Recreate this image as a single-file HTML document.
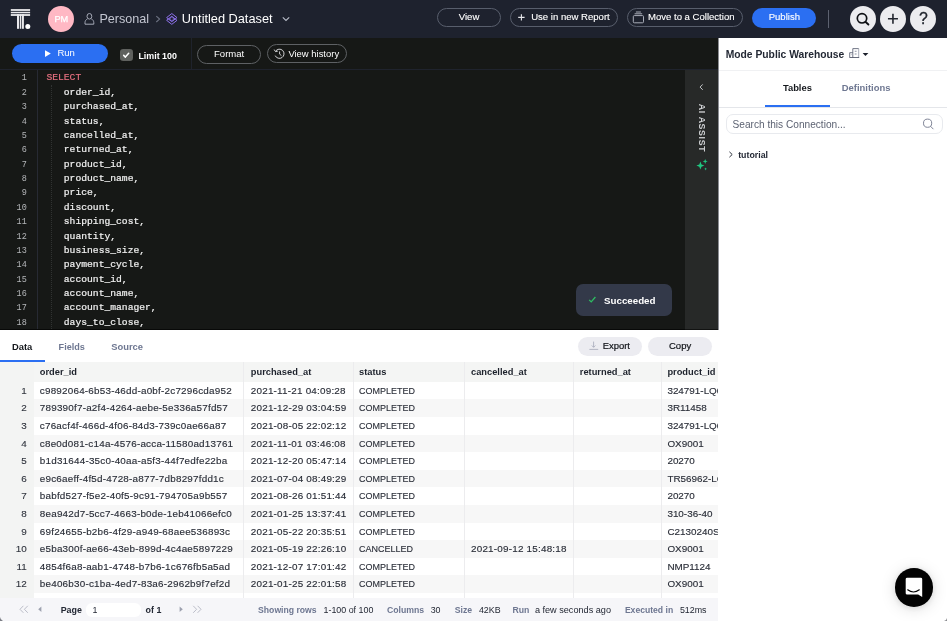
<!DOCTYPE html>
<html>
<head>
<meta charset="utf-8">
<title>Untitled Dataset</title>
<style>
html,body{margin:0;padding:0;}
body{width:947px;height:621px;overflow:hidden;background:#fff;position:relative;font-family:"Liberation Sans",sans-serif;color:#1f2430;}
.abs{position:absolute;}
.t{position:absolute;white-space:pre;line-height:14px;height:14px;}
.b{font-weight:700;}
/* header */
#hdr{left:0;top:0;width:947px;height:38px;background:#1e222e;}
.pill{position:absolute;box-sizing:border-box;border:1px solid #585e6c;border-radius:10px;height:19px;top:8px;}
.hbtn{font-size:9.55px;color:#fff;top:10.1px;-webkit-text-stroke:0.12px #fff;}
.circ{position:absolute;width:25.9px;height:25.9px;border-radius:50%;background:#ececef;top:5.95px;}
/* toolbar */
#tb{left:0;top:38px;width:718px;height:32px;background:#161816;}
#ed{left:0;top:70px;width:685px;height:260px;background:#161816;overflow:hidden;}
#ai{left:685px;top:70px;width:33px;height:260px;background:#272928;}
.ln{position:absolute;left:0;width:26.8px;text-align:right;font-family:"Liberation Mono",monospace;font-size:8.5px;color:#b4b6b9;height:14.375px;line-height:14.375px;}
.cl{position:absolute;left:46.4px;font-family:"Liberation Mono",monospace;font-size:9.68px;color:#f1f1f1;height:14.375px;line-height:14.375px;white-space:pre;-webkit-text-stroke:0.2px #f1f1f1;}
.hd{font-size:9.3px;color:#1d222c;}
.rn{left:0;width:26.8px;text-align:right;font-size:9.9px;color:#30343e;-webkit-text-stroke:0.12px #30343e;}
.c{font-size:9.9px;letter-spacing:0.21px;color:#2a2e38;-webkit-text-stroke:0.14px #2a2e38;}
.st{letter-spacing:0;transform:scaleX(0.909);transform-origin:0 50%;}
#hdr,#tb,#ed,#ai,#rp,#res,#toast{will-change:transform;}
.pi{letter-spacing:0;}
</style>
</head>
<body>

<!-- ================= HEADER ================= -->
<div id="hdr" class="abs">
  <!-- logo -->
  <svg class="abs" style="left:0;top:0" width="44" height="38" viewBox="0 0 44 38">
    <g fill="#e9e9ec">
      <rect x="10.8" y="9.1" width="19.3" height="1.8"/>
      <rect x="10.8" y="11.8" width="19.3" height="1.5"/>
      <rect x="10.8" y="14.1" width="19.3" height="1.8"/>
      <rect x="17.0" y="14.1" width="2.0" height="14.7"/>
      <rect x="19.8" y="14.1" width="1.5" height="14.7"/>
      <rect x="22.0" y="14.1" width="1.9" height="14.7"/>
    </g>
    <circle cx="27.8" cy="26.4" r="2.5" fill="#fff"/>
  </svg>
  <!-- avatar -->
  <div class="abs" style="left:48.4px;top:5.8px;width:25.8px;height:25.8px;border-radius:50%;background:#ffb8c4;"></div>
  <div class="t" style="left:48.4px;width:25.8px;top:12.0px;text-align:center;font-size:9.2px;color:#fff;-webkit-text-stroke:0.25px #fff;">PM</div>
  <!-- person icon -->
  <svg class="abs" style="left:83px;top:12px" width="13" height="14" viewBox="0 0 13 14">
    <g fill="none" stroke="#a6aab7" stroke-width="1.0">
      <ellipse cx="6.4" cy="4.3" rx="2.4" ry="2.8"/>
      <path d="M4.4 7.0 C2.8 7.7 2.1 8.9 2.0 10.6 L2.0 12.2 L10.8 12.2 L10.8 10.6 C10.7 8.9 10.0 7.7 8.4 7.0"/>
    </g>
  </svg>
  <div class="t" style="left:99.4px;top:11.6px;font-size:12.6px;color:#c3c6d1;">Personal</div>
  <!-- chevron -->
  <svg class="abs" style="left:154px;top:14px" width="8" height="10" viewBox="0 0 8 10">
    <path d="M2.3 2.2 L5.6 5.1 L2.3 8" fill="none" stroke="#6d7282" stroke-width="1.1"/>
  </svg>
  <!-- dataset icon -->
  <svg class="abs" style="left:165px;top:12px" width="14" height="14" viewBox="0 0 14 14">
    <g fill="none" stroke="#8e72ee" stroke-width="1.05" stroke-linejoin="round" transform="translate(6.8 6.95) scale(0.94) translate(-6.8 -6.85)">
      <path d="M6.8 1.1 L12.3 5.4 L6.8 9.7 L1.3 5.4 Z"/>
      <path d="M6.8 4.0 L12.3 8.3 L6.8 12.6 L1.3 8.3 Z"/>
      <path d="M3.15 6.85 L6.8 4.0 L10.45 6.85 L6.8 9.7 Z" fill="#8e72ee" fill-opacity="0.55" stroke="none"/>
      <circle cx="6.8" cy="6.85" r="1.2" fill="#1e222e" stroke="none"/>
    </g>
  </svg>
  <div class="t" style="left:181.8px;top:11.6px;font-size:12.75px;color:#fff;">Untitled Dataset</div>
  <svg class="abs" style="left:281px;top:15px" width="10" height="8" viewBox="0 0 10 8">
    <path d="M1.8 2.4 L5 5.5 L8.2 2.4" fill="none" stroke="#b9bdc9" stroke-width="1.1"/>
  </svg>

  <!-- View -->
  <div class="pill" style="left:437px;width:64.3px;"></div>
  <div class="t hbtn" style="left:458.8px;">View</div>
  <!-- Use in new Report -->
  <div class="pill" style="left:510.2px;width:108px;"></div>
  <svg class="abs" style="left:516px;top:12px" width="11" height="11" viewBox="0 0 11 11">
    <path d="M5.4 2.2 V8.6 M2.2 5.4 H8.6" stroke="#e6e7ea" stroke-width="1.1" fill="none"/>
  </svg>
  <div class="t hbtn" style="left:531.2px;">Use in new Report</div>
  <!-- Move to a Collection -->
  <div class="pill" style="left:627.3px;width:115.3px;"></div>
  <svg class="abs" style="left:632px;top:10px" width="13" height="14" viewBox="0 0 13 14">
    <g fill="none" stroke="#a9adb8" stroke-width="1">
      <rect x="1.3" y="5.6" width="10.2" height="7.2" rx="1"/>
      <path d="M2.6 3.8 H10.2 M3.9 2.0 H8.9"/>
    </g>
  </svg>
  <div class="t hbtn" style="left:648px;">Move to a Collection</div>
  <!-- Publish -->
  <div class="abs" style="left:751.7px;top:8px;width:64.4px;height:19.5px;border-radius:10px;background:#2b6ff2;"></div>
  <div class="t hbtn" style="left:768.7px;">Publish</div>
  <!-- divider -->
  <div class="abs" style="left:828px;top:9.5px;width:1px;height:18.5px;background:#5d6270;"></div>
  <!-- circles -->
  <div class="circ" style="left:849.8px;"></div>
  <svg class="abs" style="left:849.8px;top:5.8px" width="26" height="26" viewBox="0 0 26 26">
    <circle cx="12.0" cy="12.3" r="4.7" fill="none" stroke="#0e1014" stroke-width="1.7"/>
    <path d="M15.4 15.8 L18.4 18.5" stroke="#0e1014" stroke-width="1.9" stroke-linecap="round"/>
  </svg>
  <div class="circ" style="left:879.85px;"></div>
  <svg class="abs" style="left:880px;top:5.8px" width="26" height="26" viewBox="0 0 26 26">
    <path d="M12.95 7.8 V17.8 M7.95 12.8 H17.95" stroke="#22262f" stroke-width="1.6" fill="none"/>
  </svg>
  <div class="circ" style="left:910.35px;"></div>
  <div class="t" style="left:910.35px;width:25.9px;top:11.9px;text-align:center;font-size:15.8px;color:#22262f;-webkit-text-stroke:0.3px #22262f;">?</div>
</div>

<!-- ================= TOOLBAR ================= -->
<div id="tb" class="abs">
  <div class="abs" style="left:0;top:31px;width:718px;height:1px;background:#1f232d;"></div>
  <div class="abs" style="left:190.5px;top:0;width:1px;height:32px;background:#1f232c;"></div>
  <!-- Run -->
  <div class="abs" style="left:11.8px;top:5.8px;width:96.2px;height:19.3px;border-radius:10px;background:#2b6ff2;"></div>
  <svg class="abs" style="left:43px;top:11px" width="10" height="10" viewBox="0 0 10 10">
    <path d="M2 1.3 L7.8 4.6 L2 7.9 Z" fill="#fff"/>
  </svg>
  <div class="t" style="left:57.4px;top:8.3px;font-size:9.55px;color:#fff;">Run</div>
  <!-- checkbox -->
  <div class="abs" style="left:120.4px;top:10.5px;width:12.3px;height:12.5px;border-radius:3.2px;background:#5f615e;"></div>
  <svg class="abs" style="left:120.4px;top:10.5px" width="13" height="13" viewBox="0 0 13 13">
    <path d="M3.7 6.4 L5.4 8.1 L8.7 4.3" fill="none" stroke="#fff" stroke-width="1.5" stroke-linecap="round" stroke-linejoin="round"/>
  </svg>
  <div class="t b" style="left:138.4px;top:10.5px;font-size:8.9px;color:#fff;">Limit 100</div>
  <!-- Format -->
  <div class="pill" style="left:197px;top:7.2px;width:64.2px;border-color:#5e6164;"></div>
  <div class="t" style="left:214px;top:9.3px;font-size:9.55px;color:#fff;">Format</div>
  <!-- View history -->
  <div class="pill" style="left:267.3px;top:6.4px;width:80px;border-color:#5e6164;"></div>
  <svg class="abs" style="left:272.5px;top:10px" width="13" height="12" viewBox="0 0 13 12">
    <g fill="none" stroke="#d8d9db" stroke-width="0.95">
      <path d="M2.6 3.2 A4.6 4.6 0 1 1 2.2 7.6"/>
      <path d="M1.2 1.6 L2.5 3.6 L4.8 3.2"/>
      <path d="M6.6 3.4 V6.1 L8.4 7.6"/>
    </g>
  </svg>
  <div class="t" style="left:288.4px;top:8.6px;font-size:9.45px;color:#fff;">View history</div>
</div>

<!-- ================= EDITOR ================= -->
<div id="ed" class="abs">
  <div class="abs" style="left:37px;top:0;width:1px;height:260px;background:#272a33;"></div>
  <div class="abs" style="left:51.2px;top:14.6px;width:0;height:246px;border-left:1px dotted #303332;"></div>
  <div class="abs" style="left:0;top:259px;width:685px;height:1px;background:#080908;"></div>
  <div id="code">
  <div class="ln" style="top:1.40px">1</div>
  <div class="cl" style="top:1.40px;color:#e4707f;-webkit-text-stroke-color:#e4707f">SELECT</div>
  <div class="ln" style="top:15.78px">2</div>
  <div class="cl" style="top:15.78px">   order_id,</div>
  <div class="ln" style="top:30.15px">3</div>
  <div class="cl" style="top:30.15px">   purchased_at,</div>
  <div class="ln" style="top:44.52px">4</div>
  <div class="cl" style="top:44.52px">   status,</div>
  <div class="ln" style="top:58.90px">5</div>
  <div class="cl" style="top:58.90px">   cancelled_at,</div>
  <div class="ln" style="top:73.28px">6</div>
  <div class="cl" style="top:73.28px">   returned_at,</div>
  <div class="ln" style="top:87.65px">7</div>
  <div class="cl" style="top:87.65px">   product_id,</div>
  <div class="ln" style="top:102.03px">8</div>
  <div class="cl" style="top:102.03px">   product_name,</div>
  <div class="ln" style="top:116.40px">9</div>
  <div class="cl" style="top:116.40px">   price,</div>
  <div class="ln" style="top:130.78px">10</div>
  <div class="cl" style="top:130.78px">   discount,</div>
  <div class="ln" style="top:145.15px">11</div>
  <div class="cl" style="top:145.15px">   shipping_cost,</div>
  <div class="ln" style="top:159.53px">12</div>
  <div class="cl" style="top:159.53px">   quantity,</div>
  <div class="ln" style="top:173.90px">13</div>
  <div class="cl" style="top:173.90px">   business_size,</div>
  <div class="ln" style="top:188.28px">14</div>
  <div class="cl" style="top:188.28px">   payment_cycle,</div>
  <div class="ln" style="top:202.65px">15</div>
  <div class="cl" style="top:202.65px">   account_id,</div>
  <div class="ln" style="top:217.03px">16</div>
  <div class="cl" style="top:217.03px">   account_name,</div>
  <div class="ln" style="top:231.40px">17</div>
  <div class="cl" style="top:231.40px">   account_manager,</div>
  <div class="ln" style="top:245.78px">18</div>
  <div class="cl" style="top:245.78px">   days_to_close,</div>
  </div><!--/code-->
</div>

<!-- ================= AI STRIP ================= -->
<div id="ai" class="abs">
  <div class="abs" style="left:0;top:259px;width:33px;height:1px;background:#121312;"></div>
  <svg class="abs" style="left:12px;top:12px" width="9" height="10" viewBox="0 0 9 10">
    <path d="M5.7 2.4 L3.1 5.1 L5.7 7.8" fill="none" stroke="#c6c8ca" stroke-width="1"/>
  </svg>
  <div class="abs b" style="left:-13.4px;top:51.1px;width:60px;height:14px;line-height:14px;text-align:center;white-space:pre;font-size:8.8px;letter-spacing:0.62px;color:#cfd1d3;transform:rotate(90deg);transform-origin:50% 50%;">AI ASSIST</div>
  <svg class="abs" style="left:10px;top:88px" width="14" height="14" viewBox="0 0 14 14">
    <g fill="#1fc780">
      <path d="M5.4 3.6 L6.5 6.5 L9.4 7.6 L6.5 8.7 L5.4 11.6 L4.3 8.7 L1.4 7.6 L4.3 6.5 Z"/>
      <path d="M10.2 0.9 L10.9 2.7 L12.7 3.4 L10.9 4.1 L10.2 5.9 L9.5 4.1 L7.7 3.4 L9.5 2.7 Z"/>
      <path d="M10.6 9.4 L11.05 10.45 L12.1 10.9 L11.05 11.35 L10.6 12.4 L10.15 11.35 L9.1 10.9 L10.15 10.45 Z"/>
    </g>
  </svg>
</div>

<!-- ================= TOAST ================= -->
<div class="abs" style="left:575.8px;top:284.4px;width:96.4px;height:31.9px;border-radius:7px;background:#333949;"></div>
<svg class="abs" style="left:587px;top:294px" width="11" height="11" viewBox="0 0 11 11">
  <path d="M2.2 5.9 L4.2 7.9 L8.4 3.0" fill="none" stroke="#2ebd62" stroke-width="1.3"/>
</svg>
<div id="toast" class="t b" style="left:604.2px;top:294.0px;font-size:9.75px;color:#fff;">Succeeded</div>

<!-- ================= RIGHT PANEL ================= -->
<div id="rp" class="abs" style="left:718px;top:38px;width:229px;height:583px;background:#fff;"><div class="abs" style="left:0;top:0;width:1px;height:292px;background:#8b8d93;"></div><div class="abs" style="left:0.5px;top:0;width:228.5px;height:583px;">
  <div class="t b" style="left:7.2px;top:9.6px;font-size:10.3px;color:#232834;">Mode Public Warehouse</div>
  <svg class="abs" style="left:129px;top:9px" width="13" height="12" viewBox="0 0 13 12">
    <g fill="none" stroke-width="0.85">
      <path d="M4.8 10.4 V1.6 H10.9" stroke="#5a6072"/>
      <path d="M10.6 1.6 V10.4" stroke="#b9bcc6" stroke-width="1.3"/>
      <path d="M1.7 10.4 V5.7 H4.8" stroke="#5a6072"/>
      <path d="M1.5 10.5 H11.2" stroke="#4a5062"/>
      <path d="M6.7 4.3 H8.6 M6.7 7.0 H8.6" stroke="#8e93a3" stroke-width="1.1"/>
      <path d="M2.9 7.6 H3.7" stroke="#a9adb9" stroke-width="0.9"/>
    </g>
  </svg>
  <svg class="abs" style="left:143.5px;top:14px" width="8" height="5" viewBox="0 0 8 5">
    <path d="M0.6 1.0 H6.4 L3.5 3.9 Z" fill="#1b1f2a"/>
  </svg>
  <div class="abs" style="left:0;top:32px;width:228.5px;height:1px;background:#f0f1f3;"></div>
  <!-- tabs -->
  <div class="t b" style="left:64.4px;top:43px;font-size:9.4px;color:#15181d;">Tables</div>
  <div class="t b" style="left:123.2px;top:43px;font-size:9.45px;color:#6e7791;">Definitions</div>
  <div class="abs" style="left:0;top:68.6px;width:228.5px;height:1px;background:#e4e6ea;"></div>
  <div class="abs" style="left:46.5px;top:67.2px;width:64.5px;height:2px;background:#2b6ff2;"></div>
  <!-- search -->
  <div class="abs" style="left:7px;top:76.2px;width:217px;height:19.4px;box-sizing:border-box;border:1px solid #e8eaee;border-radius:7px;background:#fff;"></div>
  <div class="t" style="left:14px;top:79.7px;font-size:10.15px;color:#5c6272;">Search this Connection...</div>
  <svg class="abs" style="left:202px;top:79px" width="14" height="14" viewBox="0 0 14 14">
    <circle cx="6.6" cy="6.2" r="4.1" fill="none" stroke="#70768a" stroke-width="0.9"/>
    <path d="M9.6 9.3 L12.4 12.2" stroke="#70768a" stroke-width="0.9"/>
  </svg>
  <!-- tree -->
  <svg class="abs" style="left:8px;top:112px" width="8" height="9" viewBox="0 0 8 9">
    <path d="M2.4 1.8 L5.2 4.5 L2.4 7.2" fill="none" stroke="#232834" stroke-width="0.95"/>
  </svg>
  <div class="t b" style="left:19.7px;top:110.1px;font-size:8.8px;color:#232834;">tutorial</div>
</div></div>

<!-- ================= RESULTS ================= -->
<div id="res" class="abs" style="left:0;top:330px;width:718px;height:291px;background:#fff;overflow:hidden;"><div class="abs" style="left:0;top:-0.4px;width:718.5px;height:292px;">
<!--RES-->
<div class="t b" style="left:12px;top:10.2px;font-size:9.4px;color:#15181d;">Data</div>
<div class="t b" style="left:58.6px;top:10.2px;font-size:9.1px;color:#6e7791;">Fields</div>
<div class="t b" style="left:111.2px;top:10.2px;font-size:9.4px;color:#6e7791;">Source</div>
<div class="abs" style="left:0;top:30.4px;width:45.4px;height:2px;background:#2b6ff2;"></div>
<div class="abs" style="left:578.3px;top:7.2px;width:63.5px;height:19px;border-radius:9.5px;background:#ececf1;"></div>
<svg class="abs" style="left:587.5px;top:10.3px" width="11" height="11" viewBox="0 0 11 11"><g fill="none" stroke="#a3a7b8" stroke-width="0.8"><path d="M5.6 1.6 V7.2 M3.8 5.5 L5.6 7.3 L7.4 5.5 M1.4 9.4 H10.2"/></g></svg>
<div class="t" style="left:602.7px;top:9.3px;font-size:9.45px;color:#101318;-webkit-text-stroke:0.2px #101318;">Export</div>
<div class="abs" style="left:648.3px;top:7.2px;width:63.7px;height:19px;border-radius:9.5px;background:#ececf1;"></div>
<div class="t" style="left:669px;top:9.3px;font-size:9.5px;color:#101318;-webkit-text-stroke:0.2px #101318;">Copy</div>
<div class="abs" style="left:0;top:32.8px;width:718.5px;height:19.3px;background:#f4f5f4;"></div>
<div class="abs" style="left:0;top:32.8px;width:33.8px;height:235.3px;background:#f3f4f3;"></div>
<div class="abs" style="left:33.8px;top:52.1px;width:684.7px;height:17.6px;background:#ffffff;"></div>
<div class="abs" style="left:33.8px;top:69.7px;width:684.7px;height:17.6px;background:#f7f7f7;"></div>
<div class="abs" style="left:33.8px;top:87.3px;width:684.7px;height:17.6px;background:#ffffff;"></div>
<div class="abs" style="left:33.8px;top:104.9px;width:684.7px;height:17.6px;background:#f7f7f7;"></div>
<div class="abs" style="left:33.8px;top:122.5px;width:684.7px;height:17.6px;background:#ffffff;"></div>
<div class="abs" style="left:33.8px;top:140.1px;width:684.7px;height:17.6px;background:#f7f7f7;"></div>
<div class="abs" style="left:33.8px;top:157.7px;width:684.7px;height:17.6px;background:#ffffff;"></div>
<div class="abs" style="left:33.8px;top:175.3px;width:684.7px;height:17.6px;background:#f7f7f7;"></div>
<div class="abs" style="left:33.8px;top:192.9px;width:684.7px;height:17.6px;background:#ffffff;"></div>
<div class="abs" style="left:33.8px;top:210.5px;width:684.7px;height:17.6px;background:#f7f7f7;"></div>
<div class="abs" style="left:33.8px;top:228.1px;width:684.7px;height:17.6px;background:#ffffff;"></div>
<div class="abs" style="left:33.8px;top:245.7px;width:684.7px;height:17.6px;background:#f7f7f7;"></div>
<div class="abs" style="left:33.8px;top:263.3px;width:684.7px;height:17.6px;background:#ffffff;"></div>
<div class="abs" style="left:243.4px;top:32.8px;width:1px;height:235.3px;background:#ececee;"></div>
<div class="abs" style="left:352.5px;top:32.8px;width:1px;height:235.3px;background:#ececee;"></div>
<div class="abs" style="left:464.1px;top:32.8px;width:1px;height:235.3px;background:#ececee;"></div>
<div class="abs" style="left:572.8px;top:32.8px;width:1px;height:235.3px;background:#ececee;"></div>
<div class="abs" style="left:660.6px;top:32.8px;width:1px;height:235.3px;background:#ececee;"></div>
<div class="t b hd" style="left:39.8px;top:35.1px;">order_id</div>
<div class="t b hd" style="left:250.8px;top:35.1px;">purchased_at</div>
<div class="t b hd" style="left:359.0px;top:35.1px;">status</div>
<div class="t b hd" style="left:471.0px;top:35.1px;">cancelled_at</div>
<div class="t b hd" style="left:579.8px;top:35.1px;">returned_at</div>
<div class="t b hd" style="left:667.4px;top:35.1px;">product_id</div>
<div class="t rn" style="top:54.1px;">1</div>
<div class="t c" style="left:39.8px;top:54.1px;">c9892064-6b53-46dd-a0bf-2c7296cda952</div>
<div class="t c" style="left:250.8px;top:54.1px;">2021-11-21 04:09:28</div>
<div class="t c st" style="left:359.0px;top:54.1px;">COMPLETED</div>
<div class="t c pi" style="left:667.4px;top:54.1px;">324791-LQ02</div>
<div class="t rn" style="top:71.7px;">2</div>
<div class="t c" style="left:39.8px;top:71.7px;">789390f7-a2f4-4264-aebe-5e336a57fd57</div>
<div class="t c" style="left:250.8px;top:71.7px;">2021-12-29 03:04:59</div>
<div class="t c st" style="left:359.0px;top:71.7px;">COMPLETED</div>
<div class="t c pi" style="left:667.4px;top:71.7px;">3R11458</div>
<div class="t rn" style="top:89.3px;">3</div>
<div class="t c" style="left:39.8px;top:89.3px;">c76acf4f-466d-4f06-84d3-739c0ae66a87</div>
<div class="t c" style="left:250.8px;top:89.3px;">2021-08-05 22:02:12</div>
<div class="t c st" style="left:359.0px;top:89.3px;">COMPLETED</div>
<div class="t c pi" style="left:667.4px;top:89.3px;">324791-LQ02</div>
<div class="t rn" style="top:106.9px;">4</div>
<div class="t c" style="left:39.8px;top:106.9px;">c8e0d081-c14a-4576-acca-11580ad13761</div>
<div class="t c" style="left:250.8px;top:106.9px;">2021-11-01 03:46:08</div>
<div class="t c st" style="left:359.0px;top:106.9px;">COMPLETED</div>
<div class="t c pi" style="left:667.4px;top:106.9px;">OX9001</div>
<div class="t rn" style="top:124.5px;">5</div>
<div class="t c" style="left:39.8px;top:124.5px;">b1d31644-35c0-40aa-a5f3-44f7edfe22ba</div>
<div class="t c" style="left:250.8px;top:124.5px;">2021-12-20 05:47:14</div>
<div class="t c st" style="left:359.0px;top:124.5px;">COMPLETED</div>
<div class="t c pi" style="left:667.4px;top:124.5px;">20270</div>
<div class="t rn" style="top:142.1px;">6</div>
<div class="t c" style="left:39.8px;top:142.1px;">e9c6aeff-4f5d-4728-a877-7db8297fdd1c</div>
<div class="t c" style="left:250.8px;top:142.1px;">2021-07-04 08:49:29</div>
<div class="t c st" style="left:359.0px;top:142.1px;">COMPLETED</div>
<div class="t c pi" style="left:667.4px;top:142.1px;">TR56962-LC</div>
<div class="t rn" style="top:159.7px;">7</div>
<div class="t c" style="left:39.8px;top:159.7px;">babfd527-f5e2-40f5-9c91-794705a9b557</div>
<div class="t c" style="left:250.8px;top:159.7px;">2021-08-26 01:51:44</div>
<div class="t c st" style="left:359.0px;top:159.7px;">COMPLETED</div>
<div class="t c pi" style="left:667.4px;top:159.7px;">20270</div>
<div class="t rn" style="top:177.3px;">8</div>
<div class="t c" style="left:39.8px;top:177.3px;">8ea942d7-5cc7-4663-b0de-1eb41066efc0</div>
<div class="t c" style="left:250.8px;top:177.3px;">2021-01-25 13:37:41</div>
<div class="t c st" style="left:359.0px;top:177.3px;">COMPLETED</div>
<div class="t c pi" style="left:667.4px;top:177.3px;">310-36-40</div>
<div class="t rn" style="top:194.9px;">9</div>
<div class="t c" style="left:39.8px;top:194.9px;">69f24655-b2b6-4f29-a949-68aee536893c</div>
<div class="t c" style="left:250.8px;top:194.9px;">2021-05-22 20:35:51</div>
<div class="t c st" style="left:359.0px;top:194.9px;">COMPLETED</div>
<div class="t c pi" style="left:667.4px;top:194.9px;">C2130240SK</div>
<div class="t rn" style="top:212.5px;">10</div>
<div class="t c" style="left:39.8px;top:212.5px;">e5ba300f-ae66-43eb-899d-4c4ae5897229</div>
<div class="t c" style="left:250.8px;top:212.5px;">2021-05-19 22:26:10</div>
<div class="t c st" style="left:359.0px;top:212.5px;">CANCELLED</div>
<div class="t c" style="left:471.0px;top:212.5px;">2021-09-12 15:48:18</div>
<div class="t c pi" style="left:667.4px;top:212.5px;">OX9001</div>
<div class="t rn" style="top:230.1px;">11</div>
<div class="t c" style="left:39.8px;top:230.1px;">4854f6a8-aab1-4748-b7b6-1c676fb5a5ad</div>
<div class="t c" style="left:250.8px;top:230.1px;">2021-12-07 17:01:42</div>
<div class="t c st" style="left:359.0px;top:230.1px;">COMPLETED</div>
<div class="t c pi" style="left:667.4px;top:230.1px;">NMP1124</div>
<div class="t rn" style="top:247.7px;">12</div>
<div class="t c" style="left:39.8px;top:247.7px;">be406b30-c1ba-4ed7-83a6-2962b9f7ef2d</div>
<div class="t c" style="left:250.8px;top:247.7px;">2021-01-25 22:01:58</div>
<div class="t c st" style="left:359.0px;top:247.7px;">COMPLETED</div>
<div class="t c pi" style="left:667.4px;top:247.7px;">OX9001</div>
<div class="t rn" style="top:265.3px;">13</div>
<div class="t c" style="left:39.8px;top:265.3px;">1c3d91ab-4b7e-4f0a-9d2f-8a61d0f3b7c4</div>
<div class="t c" style="left:250.8px;top:265.3px;">2021-03-14 11:24:36</div>
<div class="t c st" style="left:359.0px;top:265.3px;">COMPLETED</div>
<div class="t c pi" style="left:667.4px;top:265.3px;">OX9001</div>
<div class="abs" style="left:0;top:268.1px;width:718.5px;height:24px;background:#f6f6f9;"></div>
<svg class="abs" style="left:18px;top:274.6px" width="12" height="11" viewBox="0 0 12 11"><g fill="none" stroke="#b4b7c3" stroke-width="0.9"><path d="M5.4 1.8 L2 5.3 L5.4 8.8 M9.8 1.8 L6.4 5.3 L9.8 8.8"/></g></svg>
<svg class="abs" style="left:36px;top:274.6px" width="8" height="11" viewBox="0 0 8 11"><path d="M5.4 2.6 L2.2 5.3 L5.4 8 Z" fill="#9da1af"/></svg>
<div class="t b" style="left:60.7px;top:273.70000000000005px;font-size:8.9px;color:#232834;">Page</div>
<div class="abs" style="left:86.2px;top:273.1px;width:54.4px;height:14.6px;border-radius:6px;background:#fff;"></div>
<div class="t" style="left:92.6px;top:273.70000000000005px;font-size:8.9px;color:#232834;">1</div>
<div class="t b" style="left:145.6px;top:273.70000000000005px;font-size:8.9px;color:#232834;">of 1</div>
<svg class="abs" style="left:177px;top:274.6px" width="8" height="11" viewBox="0 0 8 11"><path d="M2.6 2.6 L5.8 5.3 L2.6 8 Z" fill="#9da1af"/></svg>
<svg class="abs" style="left:191px;top:274.6px" width="12" height="11" viewBox="0 0 12 11"><g fill="none" stroke="#b4b7c3" stroke-width="0.9"><path d="M2.2 1.8 L5.6 5.3 L2.2 8.8 M6.6 1.8 L10 5.3 L6.6 8.8"/></g></svg>
<div class="t b" style="left:258.1px;top:273.70000000000005px;font-size:8.65px;color:#6e7791;">Showing rows</div>
<div class="t" style="left:323.5px;top:273.70000000000005px;font-size:8.9px;color:#232834;">1-100 of 100</div>
<div class="t b" style="left:386.9px;top:273.70000000000005px;font-size:8.7px;color:#6e7791;">Columns</div>
<div class="t" style="left:430.7px;top:273.70000000000005px;font-size:8.9px;color:#232834;">30</div>
<div class="t b" style="left:454.8px;top:273.70000000000005px;font-size:8.7px;color:#6e7791;">Size</div>
<div class="t" style="left:478.9px;top:273.70000000000005px;font-size:8.9px;color:#232834;">42KB</div>
<div class="t b" style="left:512.5px;top:273.70000000000005px;font-size:8.7px;color:#6e7791;">Run</div>
<div class="t" style="left:534.9px;top:273.70000000000005px;font-size:9.15px;color:#232834;">a few seconds ago</div>
<div class="t b" style="left:624.9px;top:273.70000000000005px;font-size:8.6px;color:#6e7791;">Executed in</div>
<div class="t" style="left:679.9px;top:273.70000000000005px;font-size:8.9px;color:#232834;">512ms</div>
<svg class="abs" style="left:0;top:287.4px" width="4" height="4" viewBox="0 0 4 4"><path d="M0 0 Q0.3 2.6 3 4 H0 Z" fill="#7d7f86"/></svg>
<!--/RES-->
</div></div>

<!-- ================= CHAT ================= -->
<div class="abs" style="left:894.7px;top:568.3px;width:38.4px;height:38.4px;border-radius:50%;background:#030303;box-shadow:0 1px 6px rgba(0,0,0,0.10),0 2px 16px rgba(0,0,0,0.13);"></div>
<svg class="abs" style="left:894.7px;top:568.3px" width="39" height="39" viewBox="0 0 39 39">
  <path d="M12.1 9.7 H25.8 Q27.2 9.7 27.2 11.1 V29.1 L23.2 26.6 H12.1 Q10.7 26.6 10.7 25.2 V11.1 Q10.7 9.7 12.1 9.7 Z" fill="#fff"/>
  <path d="M12.7 21.8 Q18.5 26.2 24.3 21.8" fill="none" stroke="#030303" stroke-width="1.15" stroke-linecap="round"/>
</svg>
<svg class="abs" style="left:944px;top:618px" width="3" height="3" viewBox="0 0 3 3"><path d="M3 0 Q2.6 2.4 0 3 H3 Z" fill="#8a8b90"/></svg>

</body>
</html>
